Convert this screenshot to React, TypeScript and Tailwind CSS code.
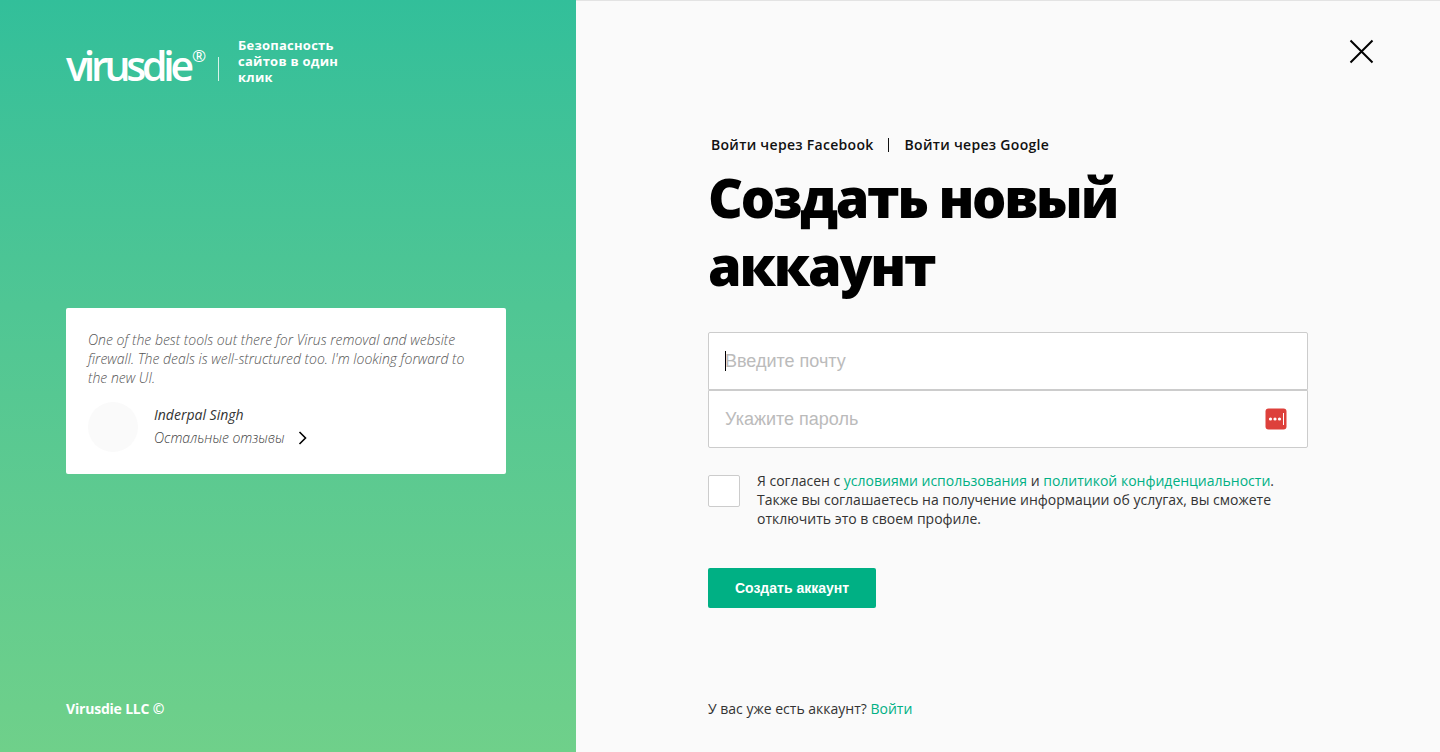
import React from "react";

const sans = "font-['Open_Sans',sans-serif]";

export default function App() {
  return (
    <div className={`flex h-[752px] w-[1440px] overflow-hidden ${sans}`}>
      {/* Left panel */}
      <aside className="flex h-full w-[576px] shrink-0 flex-col bg-gradient-to-b from-[#32bf9a] to-[#6fd08a] px-[66px]">
        <header className="flex h-[308px] shrink-0 items-start pt-[37px]">
          <div className="relative mt-[8px] flex h-[40px] w-[140px] items-center">
            <span className="text-[41px] leading-[40px] font-semibold tracking-[-4.2px] text-white">virusdie</span>
            <span className="absolute left-[126px] top-[2px] text-[17px] leading-[18px] text-white">®</span>
          </div>
          <div className="ml-[12px] mt-[20px] h-[24px] w-px bg-white/80" />
          <p className="ml-[19px] w-[110px] text-[13px] leading-[16px] font-bold tracking-[0.25px] text-white">
            Безопасность сайтов в один клик
          </p>
        </header>
        <section className="h-[166px] w-[440px] shrink-0 rounded-[2px] bg-white px-[22px] pt-[22px]">
          <p className="text-[14px] leading-[19px] font-light text-[#555] italic">
            One of the best tools out there for Virus removal and website firewall. The deals is well-structured too. I'm looking forward to the new UI.
          </p>
          <div className="mt-[15px] flex items-start">
            <div className="h-[50px] w-[50px] rounded-full bg-[#fafafa]" />
            <div className="ml-[16px]">
              <div className="mt-[1px] text-[14px] leading-[24px] text-[#333] italic">Inderpal Singh</div>
              <div className="flex items-center text-[14px] leading-[22px] font-light text-[#444] italic">
                Остальные отзывы
                <svg className="ml-[13px]" width="10" height="14" viewBox="0 0 10 14" fill="none" stroke="#000" strokeWidth="1.6">
                  <path d="M1.5 1l6 6-6 6" />
                </svg>
              </div>
            </div>
          </div>
        </section>
        <footer className="mt-auto pb-[33px] text-[14px] leading-[20px] font-bold tracking-[-0.2px] text-white">Virusdie LLC ©</footer>
      </aside>

      {/* Right panel */}
      <main className="relative flex h-full flex-1 flex-col border-t border-[#e3e3e3] bg-[#fafafa] pl-[132px]">
        <button className="absolute left-[773px] top-[38px]" aria-label="close">
          <svg width="26" height="26" viewBox="0 0 26 26" fill="none" stroke="#000" strokeWidth="2">
            <path d="M1.5 1.5l22 22M23.5 1.5l-22 22" />
          </svg>
        </button>

        <nav className="mt-[134px] flex items-center pl-[3px] text-[14px] leading-[20px] font-semibold tracking-[0.3px] text-[#111]">
          <span>Войти через Facebook</span>
          <span className="mr-[16px] ml-[14px] h-[14px] w-px bg-[#111]" />
          <span>Войти через Google</span>
        </nav>

        <h1 className="mt-[8px] w-[600px] text-[54px] leading-[68px] font-extrabold tracking-[-2.2px] text-black">
          Создать новый аккаунт
        </h1>

        <form className="mt-[33px] w-[600px]">
          <div className="flex h-[58px] items-center rounded-t-[2px] border border-[#ccc] bg-white pl-[16px]">
            <span className="mr-[-1px] h-[20px] w-px bg-black" />
            <span className="font-['Liberation_Sans',sans-serif] text-[18px] text-[#bbb]">Введите почту</span>
          </div>
          <div className="flex h-[58px] items-center justify-between rounded-b-[2px] border border-[#ccc] bg-white pr-[20px] pl-[16px]">
            <span className="font-['Liberation_Sans',sans-serif] text-[18px] text-[#bbb]">Укажите пароль</span>
            <svg width="22" height="22" viewBox="0 0 22 22">
              <rect x="0.5" y="0.5" width="21" height="21" rx="3" fill="#dd403b" />
              <circle cx="5.5" cy="11" r="1.6" fill="#fff" />
              <circle cx="10" cy="11" r="1.6" fill="#fff" />
              <circle cx="14.5" cy="11" r="1.6" fill="#fff" />
              <rect x="18" y="5" width="1" height="12" fill="#fff" />
            </svg>
          </div>

          <div className="mt-[27px] flex items-start">
            <div className="h-[32px] w-[32px] shrink-0 rounded-[2px] border border-[#ccc] bg-white" />
            <p className="mt-[-4px] ml-[17px] text-[14px] leading-[19px] text-[#333]">
              Я согласен с <span className="text-[#00b084]">условиями использования</span> и{" "}
              <span className="text-[#00b084]">политикой конфиденциальности</span>.<br />
              Также вы соглашаетесь на получение информации об услугах, вы сможете<br />
              отключить это в своем профиле.
            </p>
          </div>

          <button className="mt-[40px] h-[40px] w-[168px] rounded-[2px] bg-[#00b084] font-['Liberation_Sans',sans-serif] text-[14px] font-bold text-white">
            Создать аккаунт
          </button>
        </form>

        <p className="mt-auto pb-[33px] text-[14px] leading-[20px] text-[#333]">
          У вас уже есть аккаунт? <span className="text-[#00b084]">Войти</span>
        </p>
      </main>
    </div>
  );
}
